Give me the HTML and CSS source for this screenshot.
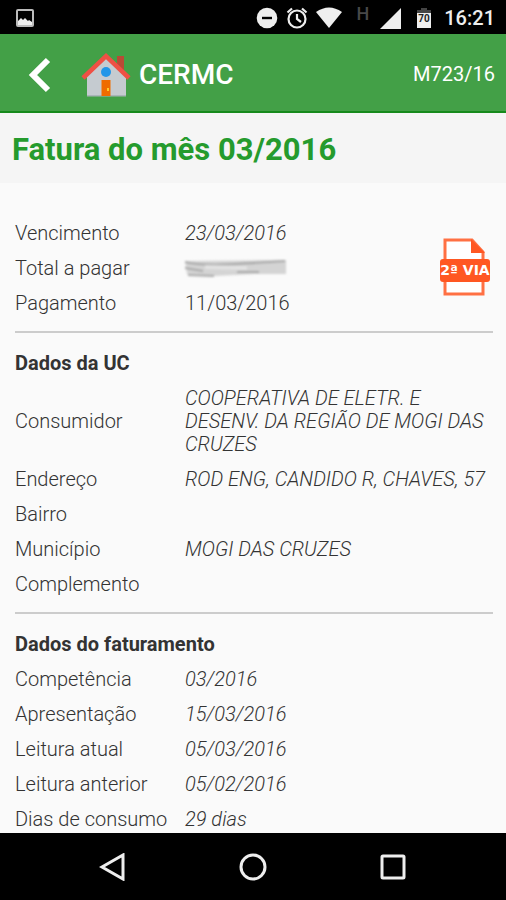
FILE: index.html
```html
<!DOCTYPE html>
<html lang="pt-BR">
<head>
    <meta charset="UTF-8">
    <meta name="viewport" content="width=device-width, initial-scale=1.0">
    <title>CERMC - Fatura</title>
    <link rel="stylesheet" href="styles.css">
</head>
<body>
    <!-- Barra de status -->
    <div class="status-bar">
      <svg class="status-photo" width="18" height="18" viewBox="0 0 18 18">
        <rect x="1" y="1" width="16" height="16" rx="1" fill="none" stroke="#bbb" stroke-width="2"/>
        <path d="M2 16v-4l3-3 2 2 2-2 3 3 1-1 3 2v3z" fill="#eee"/>
      </svg>
      <div class="status-icons">
        <svg width="22" height="22" viewBox="0 0 22 22">
          <circle cx="11" cy="11" r="10.3" fill="#eee"/>
          <path d="M6 11h10" stroke="#000" stroke-width="2.4"/>
        </svg>
        <svg width="22" height="22" viewBox="0 0 22 22" fill="none" stroke="#eee" stroke-width="2.200">
          <circle cx="11" cy="12" r="8.500"/>
          <path d="M11 7v5l4 3M1.500 5.500l4.500-4M20.500 5.500l-4.500-4"/>
        </svg>
        <svg width="26" height="22" viewBox="0 0 26 22">
          <path d="M0 5Q13-4 26 5L13 21z" fill="#eee"/>
        </svg>
        <span class="network">H</span>
        <svg width="22" height="22" viewBox="0 0 22 22">
          <path d="M21 1v21H0z" fill="#eee"/>
        </svg>
        <svg class="battery" width="16" height="22" viewBox="0 0 16 22">
          <path d="M1 3h4V1h6v2h4v4H1z" fill="#444"/>
          <path d="M1 6h14v15H1z" fill="#eee"/>
          <text x="8" y="15" text-anchor="middle">70</text>
        </svg>
      </div>
      <span class="clock">16:21</span>
    </div>

    <!-- Cabeçalho -->
    <header class="app-bar">
      <button class="back-button" type="button" aria-label="Voltar">
        <svg width="24" height="36" viewBox="0 0 24 36">
          <path d="M20 3L5 18l15 15" fill="none" stroke="#fff" stroke-width="6"/>
        </svg>
      </button>
      <svg class="house" width="50" height="46" viewBox="0 0 50 46">
        <path d="M36 4h7v17h-7z" fill="#b94a35"/>
        <path d="M6 23L25 5l20 18v21H6z" fill="#c5cbd0"/>
        <path d="M6 43h39v1.500H6z" fill="#a9b4b8"/>
        <path d="M2 26L25 4l23 22" fill="none" stroke="#ef5044" stroke-width="4.500"/>
        <circle cx="25" cy="20" r="5" fill="#2196e8"/>
        <path d="M20.500 28h9v16h-9z" fill="#ef6c00"/>
        <path d="M26 36h2v3h-2z" fill="#ffca28"/>
      </svg>
      <span class="app-name">CERMC</span>
      <span class="unit-code">M723/16</span>
    </header>

    <main class="content">
      <h1 class="invoice-title">Fatura do mês 03/2016</h1>

      <div class="invoice">
        <section class="group summary">
          <table>
            <tr><th scope="row">Vencimento</th><td>23/03/2016</td></tr>
            <tr>
              <th scope="row">Total a pagar</th>
              <td>
                <svg class="hidden-value" width="104" height="20" viewBox="0 0 104 20" role="img" aria-label="Valor oculto">
                  <path d="M0 2L101 1v14L70 15 30 17 2 15z" fill="#d4d4d4"/>
                  <path d="M0 3c20 5 50 2 100-1M0 9l18 3M52 13l22 0M3 16l26 1" fill="none" stroke="#aaa" stroke-width="2"/>
                  <path d="M20 8l42 1" stroke="#e2e2e2" stroke-width="4"/>
                </svg>
              </td>
            </tr>
            <tr><th scope="row">Pagamento</th><td class="paid">11/03/2016</td></tr>
          </table>
          <button class="copy-button" type="button">
            <svg width="52" height="58" viewBox="0 0 52 58">
              <path d="M6 2h27l11 12v42H6z" fill="#fff" stroke="#ff7043" stroke-width="3"/>
              <path d="M32 1l14 14H32z" fill="#ff5722"/>
              <rect x="1" y="21" width="50" height="23" rx="3" fill="#ff5722"/>
              <text x="26" y="37" text-anchor="middle">2ª VIA</text>
            </svg>
          </button>
        </section>

        <section class="group">
          <h2>Dados da UC</h2>
          <table>
            <tr><th scope="row">Consumidor</th><td>COOPERATIVA DE ELETR. E DESENV. DA REGIÃO DE MOGI DAS CRUZES</td></tr>
            <tr><th scope="row">Endereço</th><td>ROD ENG, CANDIDO R, CHAVES, 57</td></tr>
            <tr><th scope="row">Bairro</th><td></td></tr>
            <tr><th scope="row">Município</th><td>MOGI DAS CRUZES</td></tr>
            <tr><th scope="row">Complemento</th><td></td></tr>
          </table>
        </section>

        <section class="group">
          <h2>Dados do faturamento</h2>
          <table>
            <tr><th scope="row">Competência</th><td>03/2016</td></tr>
            <tr><th scope="row">Apresentação</th><td>15/03/2016</td></tr>
            <tr><th scope="row">Leitura atual</th><td>05/03/2016</td></tr>
            <tr><th scope="row">Leitura anterior</th><td>05/02/2016</td></tr>
            <tr><th scope="row">Dias de consumo</th><td>29 dias</td></tr>
          </table>
        </section>
      </div>
    </main>

    <!-- Botões de navegação -->
    <nav class="system-nav">
      <button type="button" aria-label="Voltar">
        <svg width="28" height="28" viewBox="0 0 28 28"><path d="M24 2v24L3 14z"/></svg>
      </button>
      <button type="button" aria-label="Início">
        <svg width="28" height="28" viewBox="0 0 28 28"><circle cx="14" cy="14" r="12"/></svg>
      </button>
      <button type="button" aria-label="Recentes">
        <svg width="28" height="28" viewBox="0 0 28 28"><rect x="3" y="3" width="22" height="22" rx="1"/></svg>
      </button>
    </nav>
</body>
</html>
```
FILE: styles.css
```css
* {
  box-sizing: border-box;
  margin: 0;
  padding: 0;
}

body {
  display: flex;
  flex-direction: column;
  height: 100vh;
  font-family: Roboto, sans-serif;
  font-size: 20px;
  line-height: 23px;
  color: #333;
  background-color: #fafafa;
}

button {
  border: none;
  background: none;
  cursor: pointer;
}

svg {
  display: block;
}

/* Barra de status */
.status-bar {
  display: flex;
  flex: none;
  align-items: center;
  height: 34px;
  padding: 2px 11px 0 16px;
  background-color: #000;
  color: #eee;
}

.status-icons {
  display: flex;
  align-items: center;
  gap: 8px;
  margin-left: auto;
}

.network {
  align-self: flex-start;
  margin: 0 3px 0 6px;
  font-size: 18px;
  font-weight: 500;
  line-height: 14px;
  color: #484848;
}

.battery {
  margin-left: 6px;
}

.battery text {
  font-size: 10px;
  font-weight: 700;
  fill: #222;
}

.clock {
  margin-left: 12px;
  font-weight: 500;
}

/* Cabeçalho */
.app-bar {
  display: flex;
  flex: none;
  align-items: center;
  height: 79px;
  padding: 4px 11px 0 28px;
  background-color: #43a047;
  border-bottom: 2px solid #168a1c;
  color: #fff;
}

.house {
  margin-left: 29px;
}

.app-name {
  margin-left: 8px;
  font-size: 28px;
  font-weight: 500;
}

.unit-code {
  margin-left: auto;
}

/* Conteúdo da fatura */
.content {
  flex: 1;
  min-height: 0;
  overflow-y: auto;
  scrollbar-width: none;
}

.invoice-title {
  padding: 20px 12px 16px;
  background-color: #f5f5f5;
  color: #259b2d;
  font-size: 31px;
  font-weight: 700;
  line-height: 34px;
}

.invoice {
  padding: 33px 13px 0 15px;
}

.group {
  padding-bottom: 10px;
}

.group + .group {
  padding-top: 13px;
  border-top: 2px solid #ccc;
}

.summary {
  display: flex;
  align-items: center;
}

table {
  flex: 1;
  width: 100%;
  border-collapse: collapse;
  table-layout: fixed;
}

h2 {
  padding: 6px 0;
  font-size: 20px;
  font-weight: 700;
  line-height: 23px;
}

th,
td {
  height: 35px;
  padding: 6px 0;
  vertical-align: middle;
}

th {
  width: 170px;
  font-weight: 300;
  text-align: left;
}

td {
  font-style: italic;
  font-weight: 300;
}

.paid {
  font-style: normal;
}

.hidden-value {
  filter: blur(1px);
}

.copy-button {
  margin: 0 2px 4px 0;
}

.copy-button text {
  font-family: "DejaVu Sans", sans-serif;
  font-size: 14px;
  font-weight: 700;
  fill: #fff;
}

/* Botões de navegação */
.system-nav {
  display: flex;
  flex: none;
  align-items: center;
  justify-content: center;
  gap: 112px;
  height: 67px;
  background-color: #000;
}

.system-nav svg {
  fill: none;
  stroke: #eee;
  stroke-width: 3;
}
```
